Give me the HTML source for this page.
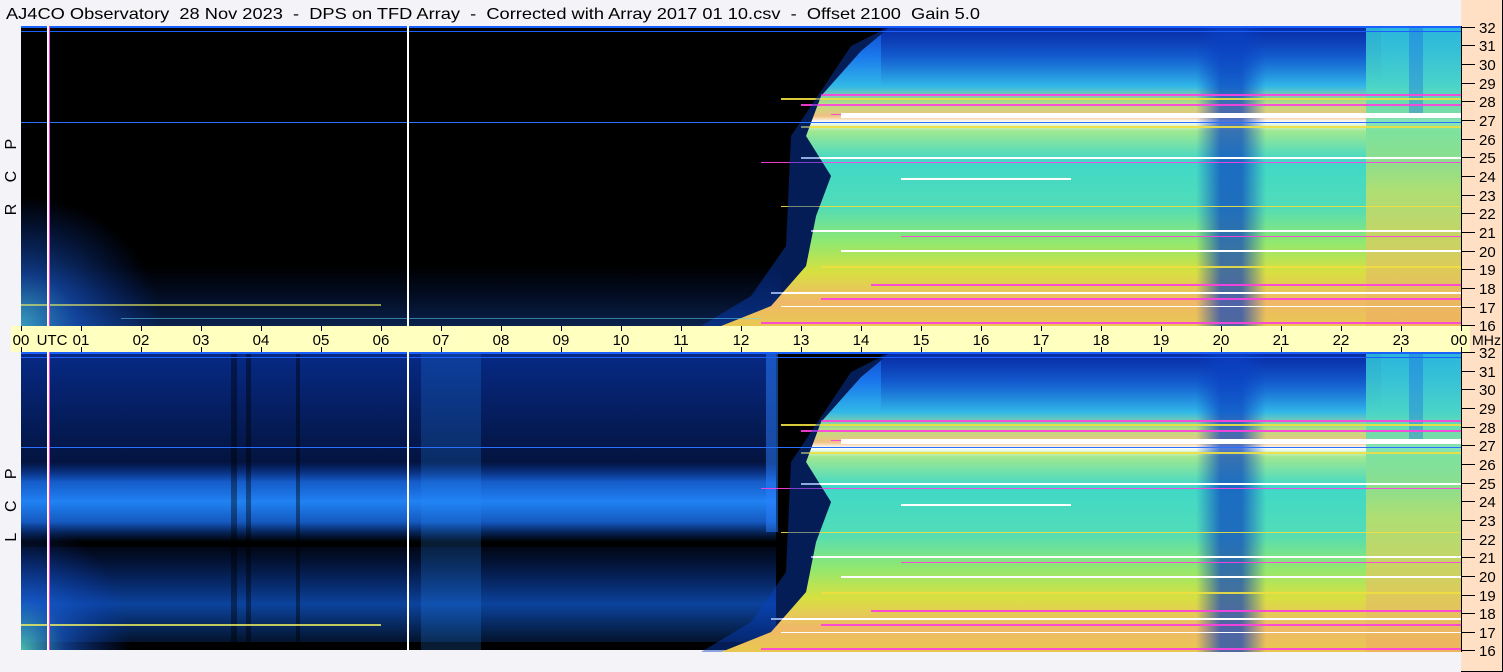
<!DOCTYPE html>
<html><head><meta charset="utf-8"><style>
body{margin:0;width:1503px;height:672px;overflow:hidden;background:#f4f4f8;font-family:"Liberation Sans","DejaVu Sans",sans-serif;}
svg{position:absolute;left:0;top:0}
</style></head><body>
<svg width="1503" height="672" viewBox="0 0 1503 672" xmlns="http://www.w3.org/2000/svg" font-family="Liberation Sans, DejaVu Sans, sans-serif">
<defs>
<linearGradient id="gv" x1="0" y1="0" x2="0" y2="1">
<stop offset="0" stop-color="#1048d0"/>
<stop offset="0.1" stop-color="#1a78ec"/>
<stop offset="0.2" stop-color="#30b8e8"/>
<stop offset="0.26" stop-color="#b8e080"/>
<stop offset="0.3" stop-color="#f0c080"/>
<stop offset="0.32" stop-color="#ffffff"/>
<stop offset="0.35" stop-color="#a0e890"/>
<stop offset="0.45" stop-color="#40d8c8"/>
<stop offset="0.6" stop-color="#50dcb8"/>
<stop offset="0.72" stop-color="#90e870"/>
<stop offset="0.82" stop-color="#d8e040"/>
<stop offset="0.92" stop-color="#f0b868"/>
<stop offset="1" stop-color="#e8c850"/>
</linearGradient>
<linearGradient id="gtop" x1="0" y1="0" x2="0" y2="1">
<stop offset="0" stop-color="#001080" stop-opacity="0.55"/>
<stop offset="1" stop-color="#001080" stop-opacity="0"/>
</linearGradient>
<linearGradient id="gband" x1="0" y1="0" x2="1" y2="0">
<stop offset="0" stop-color="#0a40c0" stop-opacity="0"/>
<stop offset="0.35" stop-color="#0a40c0" stop-opacity="0.7"/>
<stop offset="0.65" stop-color="#0a40c0" stop-opacity="0.7"/>
<stop offset="1" stop-color="#0a40c0" stop-opacity="0"/>
</linearGradient>
<linearGradient id="gright" x1="0" y1="0" x2="0" y2="1">
<stop offset="0" stop-color="#30d0e0"/>
<stop offset="0.3" stop-color="#60e0b0"/>
<stop offset="0.55" stop-color="#c8e060"/>
<stop offset="1" stop-color="#f0b060"/>
</linearGradient>
<linearGradient id="haze" x1="0" y1="0" x2="0" y2="1">
<stop offset="0" stop-color="#0a50e0" stop-opacity="0"/>
<stop offset="0.25" stop-color="#1a70f0" stop-opacity="0.8"/>
<stop offset="0.5" stop-color="#2288ff" stop-opacity="0.95"/>
<stop offset="0.75" stop-color="#1a70f0" stop-opacity="0.8"/>
<stop offset="1" stop-color="#0a50e0" stop-opacity="0"/>
</linearGradient>
<linearGradient id="dim" x1="0" y1="0" x2="0" y2="1">
<stop offset="0" stop-color="#0a3cc0" stop-opacity="0.7"/>
<stop offset="1" stop-color="#0a3cc0" stop-opacity="0.2"/>
</linearGradient>
<linearGradient id="lowhaze" x1="0" y1="0" x2="0" y2="1">
<stop offset="0" stop-color="#0a40c8" stop-opacity="0.1"/>
<stop offset="0.6" stop-color="#1060e0" stop-opacity="0.7"/>
<stop offset="1" stop-color="#1060e0" stop-opacity="0.2"/>
</linearGradient>
<radialGradient id="lglow" cx="0" cy="1" r="1">
<stop offset="0" stop-color="#50d0c0" stop-opacity="0.9"/>
<stop offset="0.4" stop-color="#1a60d8" stop-opacity="0.6"/>
<stop offset="1" stop-color="#0a3cc0" stop-opacity="0"/>
</radialGradient>
<linearGradient id="botglow" x1="0" y1="0" x2="0" y2="1">
<stop offset="0" stop-color="#0a3cc0" stop-opacity="0"/>
<stop offset="1" stop-color="#1a60d8" stop-opacity="0.35"/>
</linearGradient>
<g id="bright">
<polygon points="870,0 840,25 800,70 785,110 810,150 795,190 785,240 750,280 700,300 1440,300 1440,0" fill="url(#gv)"/>
<rect x="860" y="0" width="500" height="60" fill="url(#gtop)"/>
<rect x="1175" y="0" width="70" height="300" fill="url(#gband)"/>
<rect x="1345" y="0" width="95" height="300" fill="url(#gright)" opacity="0.8"/>
<rect x="1388" y="0" width="14" height="90" fill="#1a60e0" opacity="0.35"/>
<g fill="#ff40e0" opacity="0.9">
<rect x="800" y="68" width="640" height="2"/><rect x="780" y="78" width="660" height="2"/><rect x="810" y="88" width="630" height="1"/>
<rect x="740" y="136" width="700" height="1"/><rect x="850" y="258" width="590" height="2"/><rect x="800" y="272" width="640" height="2"/>
<rect x="740" y="296" width="700" height="2"/><rect x="880" y="210" width="560" height="1"/>
</g>
<g fill="#ffffff">
<rect x="820" y="87" width="620" height="5"/><rect x="780" y="131" width="660" height="2"/><rect x="790" y="204" width="650" height="2"/>
<rect x="820" y="224" width="620" height="2"/><rect x="750" y="266" width="690" height="2"/><rect x="760" y="280" width="680" height="1"/>
<rect x="880" y="152" width="170" height="2"/>
</g>
<g fill="#f0e040" opacity="0.9">
<rect x="760" y="72" width="680" height="2"/><rect x="780" y="100" width="660" height="2"/><rect x="760" y="180" width="680" height="1"/>
<rect x="800" y="240" width="640" height="2"/>
</g>
<polygon points="870,0 840,25 800,70 785,110 810,150 795,190 785,240 750,280 700,300 680,300 730,270 765,220 770,110 830,20" fill="#0840c0" opacity="0.45"/>
</g>
</defs>

<text x="6" y="19" font-size="16" fill="#000" textLength="974" lengthAdjust="spacingAndGlyphs" xml:space="preserve">AJ4CO Observatory  28 Nov 2023  -  DPS on TFD Array  -  Corrected with Array 2017 01 10.csv  -  Offset 2100  Gain 5.0</text>

<rect x="1461" y="0" width="42" height="672" fill="#ffe0c4"/>

<g transform="translate(21,26)">
<rect width="1440" height="300" fill="#000"/>
<rect x="0" y="170" width="140" height="130" fill="url(#lglow)"/>
<rect x="0" y="240" width="760" height="60" fill="url(#botglow)"/>
<use href="#bright"/>
<rect x="0" y="0" width="1440" height="2" fill="#1a60ff"/>
<rect x="0" y="5" width="1440" height="1" fill="#1a60ff"/>
<rect x="0" y="96" width="1440" height="1" fill="#2a70ff"/>
<rect x="0" y="278" width="360" height="2" fill="#f0f060" opacity="0.6"/>
<rect x="100" y="292" width="640" height="1" fill="#60e0ff" opacity="0.5"/>
<rect x="26" y="0" width="3" height="300" fill="#ff30e0"/>
<rect x="26" y="0" width="2" height="300" fill="#ffffff"/>
<rect x="386" y="0" width="2" height="300" fill="#ffffff"/>
</g>

<g transform="translate(21,352)">
<rect width="1440" height="298" fill="#000"/>
<rect x="0" y="0" width="755" height="150" fill="url(#dim)"/>
<rect x="0" y="110" width="755" height="80" fill="url(#haze)"/>
<rect x="0" y="195" width="755" height="95" fill="url(#lowhaze)"/>
<rect x="210" y="0" width="6" height="298" fill="#000" opacity="0.4"/>
<rect x="225" y="0" width="5" height="298" fill="#000" opacity="0.4"/>
<rect x="275" y="0" width="4" height="298" fill="#000" opacity="0.4"/>
<rect x="400" y="0" width="60" height="298" fill="#2a90ff" opacity="0.2"/>
<rect x="0" y="170" width="110" height="128" fill="url(#lglow)"/>
<rect x="745" y="0" width="12" height="180" fill="#2a80ff" opacity="0.5"/>
<use href="#bright"/>
<rect x="0" y="0" width="1440" height="2" fill="#1a60ff"/>
<rect x="0" y="5" width="1440" height="1" fill="#1a60ff"/>
<rect x="0" y="95" width="1440" height="1" fill="#2a70ff"/>
<rect x="0" y="272" width="360" height="2" fill="#f0f060" opacity="0.8"/>
<rect x="26" y="0" width="2" height="298" fill="#ffffff"/>
<rect x="28" y="0" width="1" height="298" fill="#ff30e0"/>
<rect x="386" y="0" width="2" height="298" fill="#ffffff"/>
</g>

<rect x="11" y="326" width="1459" height="26" fill="#ffffc0"/>
<g stroke="#000" stroke-width="1">
<path d="M21.5 326v5M21.5 347v5M81.5 326v5M81.5 347v5M141.5 326v5M141.5 347v5M201.5 326v5M201.5 347v5M261.5 326v5M261.5 347v5M321.5 326v5M321.5 347v5M381.5 326v5M381.5 347v5M441.5 326v5M441.5 347v5M501.5 326v5M501.5 347v5M561.5 326v5M561.5 347v5M621.5 326v5M621.5 347v5M681.5 326v5M681.5 347v5M741.5 326v5M741.5 347v5M801.5 326v5M801.5 347v5M861.5 326v5M861.5 347v5M921.5 326v5M921.5 347v5M981.5 326v5M981.5 347v5M1041.5 326v5M1041.5 347v5M1101.5 326v5M1101.5 347v5M1161.5 326v5M1161.5 347v5M1221.5 326v5M1221.5 347v5M1281.5 326v5M1281.5 347v5M1341.5 326v5M1341.5 347v5M1401.5 326v5M1401.5 347v5M1461.5 326v5M1461.5 347v5"/>
</g>
<g font-size="15" fill="#000" text-anchor="middle">
<text x="21" y="345">00</text><text x="52" y="345">UTC</text><text x="81" y="345">01</text><text x="141" y="345">02</text><text x="201" y="345">03</text><text x="261" y="345">04</text><text x="321" y="345">05</text><text x="381" y="345">06</text><text x="441" y="345">07</text><text x="501" y="345">08</text><text x="561" y="345">09</text><text x="621" y="345">10</text><text x="681" y="345">11</text><text x="741" y="345">12</text><text x="801" y="345">13</text><text x="861" y="345">14</text><text x="921" y="345">15</text><text x="981" y="345">16</text><text x="1041" y="345">17</text><text x="1101" y="345">18</text><text x="1161" y="345">19</text><text x="1221" y="345">20</text><text x="1281" y="345">21</text><text x="1341" y="345">22</text><text x="1401" y="345">23</text><text x="1459" y="345">00</text>
</g>
<text x="1472" y="345" font-size="14" fill="#000" textLength="29" lengthAdjust="spacingAndGlyphs">MHz</text>

<g font-size="16" fill="#000" text-anchor="middle">
<text transform="translate(16,176) rotate(-90)" xml:space="preserve" letter-spacing="2">R   C   P</text>
<text transform="translate(16,504) rotate(-90)" xml:space="preserve" letter-spacing="2">L   C   P</text>
</g>

<path d="M1461.5 26V326M1461.5 352V652" stroke="#000"/>
<path d="M1502.5 0V672M1461 671.5H1503" stroke="#000"/>
<g stroke="#000">
<path d="M1461 27.5h14M1461 45.5h14M1461 64.5h14M1461 83.5h14M1461 101.5h14M1461 120.5h14M1461 139.5h14M1461 157.5h14M1461 176.5h14M1461 195.5h14M1461 213.5h14M1461 232.5h14M1461 251.5h14M1461 269.5h14M1461 288.5h14M1461 307.5h14M1461 325.5h14"/>
<path d="M1461 352.5h14M1461 371.5h14M1461 389.5h14M1461 408.5h14M1461 427.5h14M1461 445.5h14M1461 464.5h14M1461 483.5h14M1461 501.5h14M1461 520.5h14M1461 539.5h14M1461 557.5h14M1461 576.5h14M1461 595.5h14M1461 613.5h14M1461 632.5h14M1461 650.5h14"/>
</g>
<g font-size="15" fill="#000">
<text x="1479" y="33">32</text><text x="1479" y="51">31</text><text x="1479" y="70">30</text><text x="1479" y="89">29</text><text x="1479" y="107">28</text><text x="1479" y="126">27</text><text x="1479" y="145">26</text><text x="1479" y="163">25</text><text x="1479" y="182">24</text><text x="1479" y="201">23</text><text x="1479" y="219">22</text><text x="1479" y="238">21</text><text x="1479" y="257">20</text><text x="1479" y="275">19</text><text x="1479" y="294">18</text><text x="1479" y="313">17</text><text x="1479" y="331">16</text>
<text x="1479" y="358">32</text><text x="1479" y="377">31</text><text x="1479" y="395">30</text><text x="1479" y="414">29</text><text x="1479" y="433">28</text><text x="1479" y="451">27</text><text x="1479" y="470">26</text><text x="1479" y="489">25</text><text x="1479" y="507">24</text><text x="1479" y="526">23</text><text x="1479" y="545">22</text><text x="1479" y="563">21</text><text x="1479" y="582">20</text><text x="1479" y="601">19</text><text x="1479" y="619">18</text><text x="1479" y="638">17</text><text x="1479" y="656">16</text>
</g>
</svg>
</body></html>
